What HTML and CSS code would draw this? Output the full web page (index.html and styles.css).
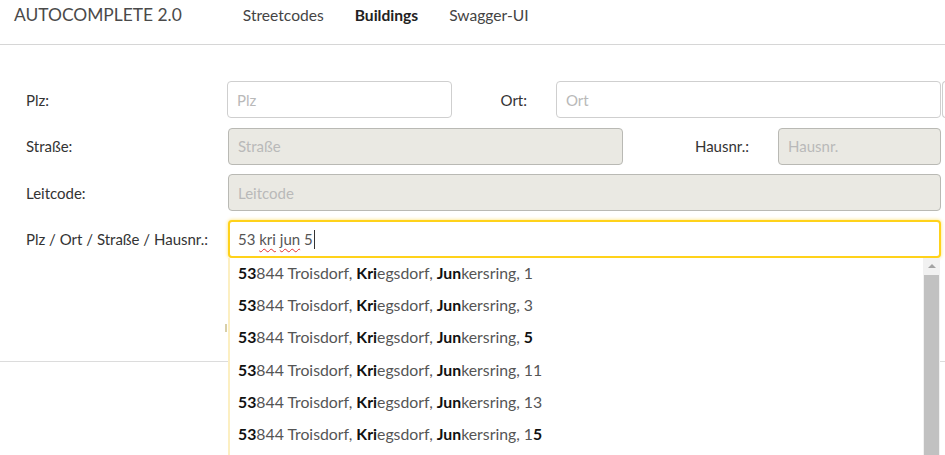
FILE: index.html
```html
<!DOCTYPE html>
<html lang="de">
<head>
  <meta charset="UTF-8">
  <title>Autocomplete 2.0 - Buildings</title>
  <link rel="stylesheet" href="styles.css">
</head>
<body>
  <div class="navbar">
    <span class="brand">AUTOCOMPLETE 2.0</span>
    <a class="nav-link">Streetcodes</a>
    <a class="nav-link active">Buildings</a>
    <a class="nav-link">Swagger-UI</a>
  </div>

  <div class="form">
    <div class="row">
      <label class="lbl">Plz:</label>
      <div class="field w-plz"><span class="ph">Plz</span></div>
      <label class="lbl-side w-ort-lbl">Ort:</label>
      <div class="field w-ort"><span class="ph">Ort</span></div>
      <span class="addon"></span>
    </div>
    <div class="row">
      <label class="lbl">Straße:</label>
      <div class="field disabled w-str"><span class="ph">Straße</span></div>
      <label class="lbl-side w-hnr-lbl">Hausnr.:</label>
      <div class="field disabled w-hnr"><span class="ph">Hausnr.</span></div>
    </div>
    <div class="row">
      <label class="lbl">Leitcode:</label>
      <div class="field disabled w-full"><span class="ph">Leitcode</span></div>
    </div>
    <div class="row">
      <label class="lbl">Plz / Ort / Straße / Hausnr.:</label>
      <div class="search-wrap">
        <div class="field focus w-full">
          <span>53 <span class="typo">kri</span> <span class="typo">jun</span> 5</span><span class="caret"></span>
        </div>
        <ul class="suggestions">
          <li><b>53</b>844 Troisdorf, <b>Kri</b>egsdorf, <b>Jun</b>kersring, 1</li>
          <li><b>53</b>844 Troisdorf, <b>Kri</b>egsdorf, <b>Jun</b>kersring, 3</li>
          <li><b>53</b>844 Troisdorf, <b>Kri</b>egsdorf, <b>Jun</b>kersring, <b>5</b></li>
          <li><b>53</b>844 Troisdorf, <b>Kri</b>egsdorf, <b>Jun</b>kersring, 11</li>
          <li><b>53</b>844 Troisdorf, <b>Kri</b>egsdorf, <b>Jun</b>kersring, 13</li>
          <li><b>53</b>844 Troisdorf, <b>Kri</b>egsdorf, <b>Jun</b>kersring, 1<b>5</b></li>
        </ul>
        <div class="scrollbar">
          <div class="sb-up"></div>
          <div class="sb-thumb"></div>
        </div>
      </div>
    </div>
    <div class="actions"><span class="btn-edge"></span></div>
  </div>
  <div class="results"></div>
</body>
</html>
```

FILE: styles.css
```css
body {
  margin: 0;
  font-family: Lato, "Open Sans", Arial, sans-serif;
  font-size: 15px;
  color: #333;
  background: #fff;
  overflow: hidden;
  width: 945px;
  height: 455px;
}
.navbar {
  height: 45px;
  border-bottom: 1px solid #d6d6d6;
  display: flex;
  align-items: flex-start;
  padding: 4px 0 0 14px;
  box-sizing: border-box;
}
.brand {
  font-size: 17.4px;
  color: #4a4a4a;
  margin-right: 61px;
  line-height: 22px;
}
.nav-link {
  font-size: 15.6px;
  color: #444;
  line-height: 22px;
  margin-right: 31px;
}
.nav-link.active {
  font-weight: 700;
  color: #222;
}
.form {
  padding: 36px 0 0 26px;
}
.row {
  display: flex;
  align-items: center;
  margin-bottom: 9.5px;
  height: 37px;
}
.lbl {
  width: 201px;
  flex: none;
}
.lbl-side {
  flex: none;
  text-align: right;
  padding-right: 29px;
  box-sizing: border-box;
}
.field {
  height: 37px;
  box-sizing: border-box;
  border: 1px solid #cfcfcf;
  border-radius: 4px;
  background: #fff;
  padding: 0 9px;
  display: flex;
  align-items: center;
  flex: none;
  color: #555;
}
.field.disabled {
  background: #eae9e3;
  border-color: #b9b9b4;
}
.field.focus {
  border: 2px solid #ffd21a;
  box-shadow: 0 0 3px 1px rgba(255, 215, 60, 0.45);
  padding-left: 8px;
  height: 38px;
}
.ph {
  color: #b9b9b9;
}
.w-plz { width: 225px; }
.w-ort-lbl { width: 104px; }
.w-ort { width: 385px; }
.w-str { width: 395px; margin-left: 1px; }
.w-hnr-lbl { width: 155px; }
.w-hnr { width: 163px; }
.w-full { width: 713px; margin-left: 1px; }
.addon {
  width: 12px;
  height: 37px;
  margin-left: 1px;
  border: 1px solid #cfcfcf;
  border-radius: 4px 0 0 4px;
  border-right: none;
  box-sizing: border-box;
  flex: none;
}
.typo {
  text-decoration: underline wavy #e03030;
  text-decoration-thickness: 1px;
  text-underline-offset: 3px;
}
.caret {
  display: inline-block;
  width: 1px;
  height: 19px;
  background: #333;
  margin-left: 1px;
}
.search-wrap {
  position: relative;
}
.suggestions {
  position: absolute;
  top: 38px;
  left: 1px;
  width: 712px;
  height: 200px;
  margin: 0;
  padding: 0;
  list-style: none;
  background: #fff;
  border-left: 2px solid #fcefc2;
  box-sizing: border-box;
  z-index: 2;
  overflow: hidden;
}
.suggestions li {
  height: 32.2px;
  line-height: 30px;
  padding-left: 8px;
  font-size: 15.8px;
  color: #555;
  white-space: nowrap;
}
.suggestions b {
  color: #111;
  font-weight: 700;
}
.scrollbar {
  position: absolute;
  top: 38px;
  right: 1px;
  width: 17px;
  height: 200px;
  background: #f1f1f1;
  z-index: 3;
}
.sb-up {
  height: 17px;
  position: relative;
}
.sb-up::after {
  content: "";
  position: absolute;
  left: 5px;
  top: 6px;
  border-left: 4px solid transparent;
  border-right: 4px solid transparent;
  border-bottom: 4px solid #a3a3a3;
}
.sb-thumb {
  margin: 0 1px;
  height: 183px;
  background: #c1c1c1;
}
.actions {
  height: 94px;
  position: relative;
}
.btn-edge {
  position: absolute;
  left: 199px;
  top: 57px;
  width: 2px;
  height: 8px;
  background: #d8cfa8;
}
.results {
  border-top: 1px solid #dcdcdc;
}
```
